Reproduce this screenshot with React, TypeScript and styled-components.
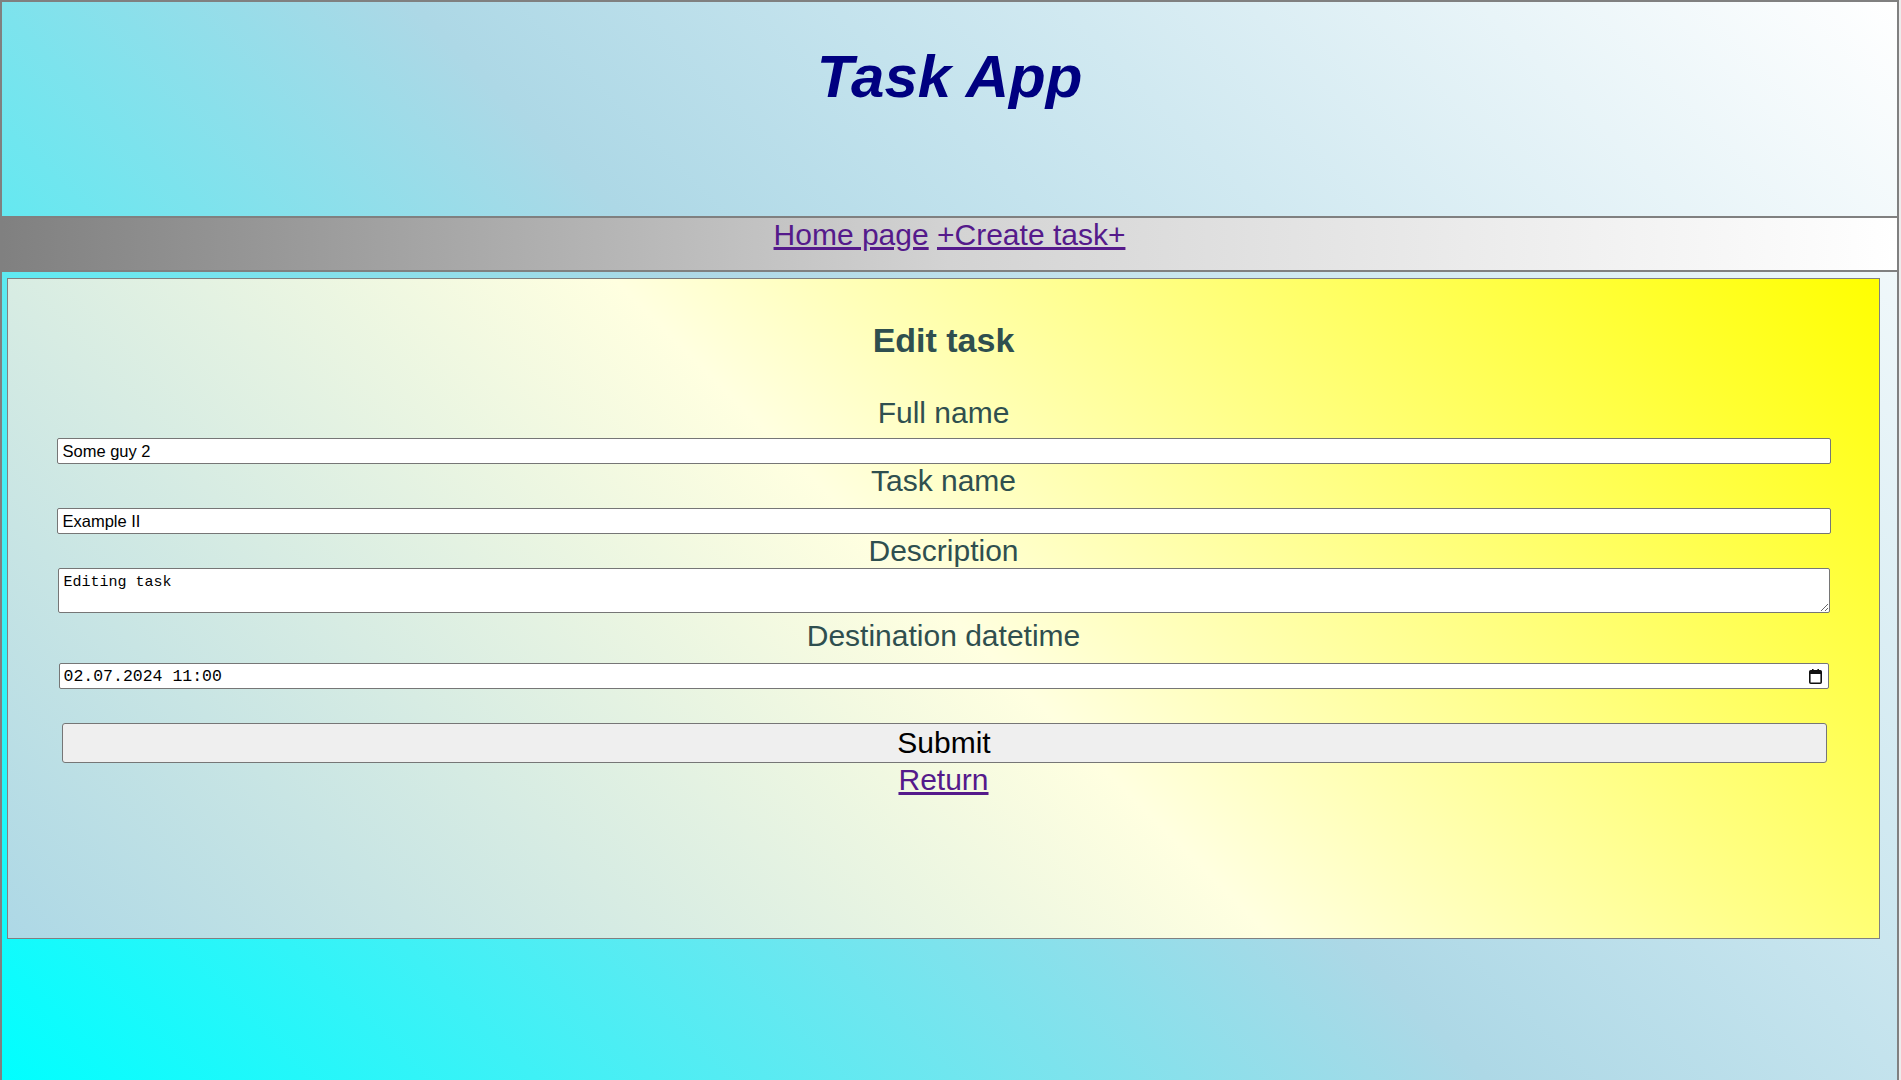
import React, { useState } from "react";
import styled, { createGlobalStyle } from "styled-components";

// --- Global ---

const GlobalStyle = createGlobalStyle`
  html, body {
    margin: 0;
    padding: 0;
    background: #ececec;
  }
  body {
    font-family: "Liberation Sans", Arial, sans-serif;
  }
  * {
    box-sizing: border-box;
  }
`;

// --- Page frame ---

const Page = styled.div`
  width: 1899px;
  height: 1080px;
  border: 2px solid gray;
  border-bottom: none;
  background: linear-gradient(45deg, cyan, lightblue, white);
`;

const Header = styled.header`
  height: 216px;
  padding-top: 40px;
  border-bottom: 2px solid gray;
`;

const Title = styled.h1`
  margin: 0;
  font-size: 60px;
  line-height: 69px;
  font-weight: bold;
  font-style: italic;
  color: navy;
  text-align: center;
`;

const NavBar = styled.nav`
  height: 54px;
  border-bottom: 2px solid gray;
  background: linear-gradient(to right, gray, lightgray, white);
  text-align: center;
  font-size: 30px;
  line-height: 34px;
`;

const Link = styled.a`
  color: #551a8b;
  text-decoration: underline;
  cursor: pointer;
`;

// --- Edit panel ---

const Panel = styled.main`
  margin: 6px 17px 0 5px;
  height: 661px;
  border: 1px solid gray;
  background: linear-gradient(45deg, lightblue, lightyellow, yellow);
`;

const Heading = styled.h2`
  margin: 42px 0 36px;
  font-size: 34px;
  line-height: 39px;
  font-weight: bold;
  color: darkslategray;
  text-align: center;
`;

const Form = styled.form`
  width: 1774px;
  margin: 0 auto;
  display: flex;
  flex-direction: column;
`;

const FieldLabel = styled.label<{ $top?: number }>`
  display: block;
  margin-top: ${(p) => p.$top ?? 0}px;
  font-size: 30px;
  line-height: 34px;
  color: darkslategray;
  text-align: center;
`;

const TextInput = styled.input<{ $top: number }>`
  display: block;
  width: 100%;
  height: 26px;
  margin-top: ${(p) => p.$top}px;
  padding: 0 5px;
  border: 1px solid #767676;
  border-radius: 2px;
  background: #fff;
  font-family: "Liberation Sans", Arial, sans-serif;
  font-size: 16.5px;
  color: #000;
  outline: none;
`;

const TextArea = styled.textarea`
  display: block;
  width: calc(100% - 2px);
  height: 45px;
  margin: 0 1px;
  padding: 5px 5px 2px;
  border: 1px solid #767676;
  border-radius: 2px;
  background: #fff;
  font-family: "Liberation Mono", "DejaVu Sans Mono", monospace;
  font-size: 15px;
  line-height: 18px;
  color: #000;
  outline: none;
  resize: vertical;
`;

const DateBox = styled.div`
  display: flex;
  align-items: center;
  width: calc(100% - 4px);
  height: 26px;
  margin: 10px 2px 0;
  padding: 0 6px 0 4px;
  border: 1px solid #767676;
  border-radius: 2px;
  background: #fff;
`;

const DateText = styled.input`
  flex: 1;
  border: none;
  outline: none;
  padding: 0;
  background: transparent;
  font-family: "Liberation Mono", "DejaVu Sans Mono", monospace;
  font-size: 16.5px;
  color: #000;
`;

const SubmitButton = styled.button`
  display: block;
  width: calc(100% - 9px);
  height: 40px;
  margin: 34px 4px 0 5px;
  border: 1px solid #767676;
  border-radius: 3px;
  background: #efefef;
  font-family: "Liberation Sans", Arial, sans-serif;
  font-size: 30px;
  line-height: 34px;
  color: #000;
  cursor: pointer;
`;

const ReturnRow = styled.div`
  text-align: center;
  font-size: 30px;
  line-height: 34px;
`;

const CalendarIcon = () => (
  <svg width="13" height="15" viewBox="0 0 13 15" aria-hidden="true">
    <rect x="3" y="0" width="1.6" height="3" fill="#111" />
    <rect x="8.4" y="0" width="1.6" height="3" fill="#111" />
    <rect x="0.8" y="1.8" width="11.4" height="12.4" rx="1" fill="none" stroke="#111" strokeWidth="1.6" />
    <rect x="0.8" y="1.8" width="11.4" height="3.2" fill="#111" />
  </svg>
);

// --- App ---

export default function App() {
  const [fullName, setFullName] = useState("Some guy 2");
  const [taskName, setTaskName] = useState("Example II");
  const [description, setDescription] = useState("Editing task");
  const [deadline, setDeadline] = useState("02.07.2024 11:00");

  return (
    <>
      <GlobalStyle />
      <Page>
        <Header>
          <Title>Task App</Title>
        </Header>
        <NavBar>
          <Link>Home page</Link> <Link>+Create task+</Link>
        </NavBar>
        <Panel>
          <Heading>Edit task</Heading>
          <Form onSubmit={(e) => e.preventDefault()}>
            <FieldLabel htmlFor="fullName">Full name</FieldLabel>
            <TextInput
              id="fullName"
              $top={8}
              value={fullName}
              onChange={(e) => setFullName(e.target.value)}
            />
            <FieldLabel htmlFor="taskName">Task name</FieldLabel>
            <TextInput
              id="taskName"
              $top={10}
              value={taskName}
              onChange={(e) => setTaskName(e.target.value)}
            />
            <FieldLabel htmlFor="description">Description</FieldLabel>
            <TextArea
              id="description"
              value={description}
              onChange={(e) => setDescription(e.target.value)}
            />
            <FieldLabel htmlFor="deadline" $top={6}>
              Destination datetime
            </FieldLabel>
            <DateBox>
              <DateText
                id="deadline"
                value={deadline}
                onChange={(e) => setDeadline(e.target.value)}
              />
              <CalendarIcon />
            </DateBox>
            <SubmitButton type="submit">Submit</SubmitButton>
            <ReturnRow>
              <Link>Return</Link>
            </ReturnRow>
          </Form>
        </Panel>
      </Page>
    </>
  );
}
